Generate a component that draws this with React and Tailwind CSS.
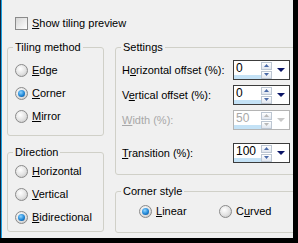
import React from "react";

function Radio({ checked }) {
  return (
    <span className="relative flex h-[13px] w-[13px] shrink-0 items-center justify-center rounded-full border border-[#8a8a8a] bg-[radial-gradient(circle_at_40%_35%,#ffffff,#e2e2e2_55%,#bdbdbd)]">
      {checked && (
        <span className="h-[7px] w-[7px] rounded-full bg-[radial-gradient(circle_at_40%_35%,#8fd4ff,#1f86d6_55%,#0b3f7a)]" />
      )}
    </span>
  );
}

function RadioRow({ checked, children, className = "" }) {
  return (
    <div className={`flex h-[23px] items-center gap-[4px] ${className}`}>
      <Radio checked={checked} />
      <span>{children}</span>
    </div>
  );
}

function Arrow({ up, disabled }) {
  return (
    <svg width="5" height="3" viewBox="0 0 5 3">
      <polygon
        points={up ? "0,3 5,3 2.5,0" : "0,0 5,0 2.5,3"}
        fill={disabled ? "#b8b8b8" : "#4a6aa8"}
      />
    </svg>
  );
}

function Spin({ value, disabled }) {
  return (
    <div
      className={`flex h-[20px] w-[57px] shrink-0 border bg-white ${
        disabled ? "border-[#b4b4b4]" : "border-[#3c3c3c]"
      }`}
    >
      <div className="flex w-[27px] flex-col">
        <div
          className={`flex-1 pl-[2px] text-[12px] leading-[14px] ${
            disabled ? "text-[#a8a8a8]" : "text-black"
          }`}
        >
          {value}
        </div>
        <div className="h-[4px] bg-[#c4e2f6]" />
      </div>
      <div className="flex w-[11px] flex-col justify-center gap-[1px]">
        <div className="flex h-[8px] items-center justify-center border border-[#bcc6d2] bg-gradient-to-b from-white to-[#dfe5ee]">
          <Arrow up disabled={disabled} />
        </div>
        <div className="flex h-[8px] items-center justify-center border border-[#bcc6d2] bg-gradient-to-b from-white to-[#dfe5ee]">
          <Arrow disabled={disabled} />
        </div>
      </div>
      <div className="flex flex-1 items-center justify-center">
        <svg width="8" height="4" viewBox="0 0 8 4">
          <polygon points="0,0 8,0 4,4" fill={disabled ? "#c8c8c8" : "#0a1466"} />
        </svg>
      </div>
    </div>
  );
}

function SpinRow({ label, value, disabled, className = "" }) {
  return (
    <div className={`flex h-[20px] items-center ${className}`}>
      <span className={`w-[111px] shrink-0 ${disabled ? "text-[#a8a8a8]" : ""}`}>{label}</span>
      <Spin value={value} disabled={disabled} />
    </div>
  );
}

export default function App() {
  return (
    <div className="h-[243px] w-[298px] overflow-hidden bg-black">
      <div className="h-[238px] w-[293px] overflow-hidden border-l border-[#10243c] bg-[#f0f0f0] font-['Liberation_Sans',Arial,sans-serif] text-[11px] leading-[13px] text-black shadow-[inset_1px_0_0_#1ba1e2]">
        {/* Show tiling preview */}
        <div className="ml-[14px] flex h-[13px] items-center gap-[4px] mt-[17px]">
          <span className="h-[13px] w-[13px] border border-[#8a8a8a] bg-gradient-to-br from-[#d6d6d6] to-white" />
          <span>
            <u>S</u>how tiling preview
          </span>
        </div>

        <div className="ml-[6px] mt-[11px] flex items-start gap-[11px]">
          {/* left column */}
          <div className="flex w-[97px] shrink-0 flex-col gap-[10px]">
            <fieldset className="h-[95px] rounded-[3px] border border-[#d0d0c8] px-0">
              <legend className="ml-[5px] px-[2px]">Tiling method</legend>
              <div className="flex flex-col pl-[7px] pt-[5px]">
                <RadioRow>
                  <u>E</u>dge
                </RadioRow>
                <RadioRow checked>
                  <u>C</u>orner
                </RadioRow>
                <RadioRow>
                  <u>M</u>irror
                </RadioRow>
              </div>
            </fieldset>
            <fieldset className="h-[86px] rounded-[3px] border border-[#d0d0c8] px-0">
              <legend className="ml-[5px] px-[2px]">Direction</legend>
              <div className="flex flex-col pl-[7px] pt-[1px]">
                <RadioRow>
                  <u>H</u>orizontal
                </RadioRow>
                <RadioRow>
                  <u>V</u>ertical
                </RadioRow>
                <RadioRow checked>
                  <u>B</u>idirectional
                </RadioRow>
              </div>
            </fieldset>
          </div>

          {/* right column */}
          <div className="flex w-[190px] shrink-0 flex-col gap-[10px]">
            <fieldset className="h-[134px] rounded-[3px] border border-[#d0d0c8] px-0">
              <legend className="ml-[5px] px-[2px]">Settings</legend>
              <div className="flex flex-col pl-[6px] pt-[6px]">
                <SpinRow
                  label={
                    <>
                      H<u>o</u>rizontal offset (%):
                    </>
                  }
                  value="0"
                />
                <SpinRow
                  className="mt-[5px]"
                  label={
                    <>
                      V<u>e</u>rtical offset (%):
                    </>
                  }
                  value="0"
                />
                <SpinRow
                  className="mt-[5px]"
                  disabled
                  label={
                    <>
                      <u>W</u>idth (%):
                    </>
                  }
                  value="50"
                />
                <SpinRow
                  className="mt-[13px]"
                  label={
                    <>
                      <u>T</u>ransition (%):
                    </>
                  }
                  value="100"
                />
              </div>
            </fieldset>
            <fieldset className="h-[48px] rounded-[3px] border border-[#d0d0c8] px-0">
              <legend className="ml-[5px] px-[2px]">Corner style</legend>
              <div className="flex pl-[23px] pt-[2px]">
                <RadioRow checked className="w-[80px]">
                  <u>L</u>inear
                </RadioRow>
                <RadioRow>
                  C<u>u</u>rved
                </RadioRow>
              </div>
            </fieldset>
          </div>
        </div>
      </div>
    </div>
  );
}
